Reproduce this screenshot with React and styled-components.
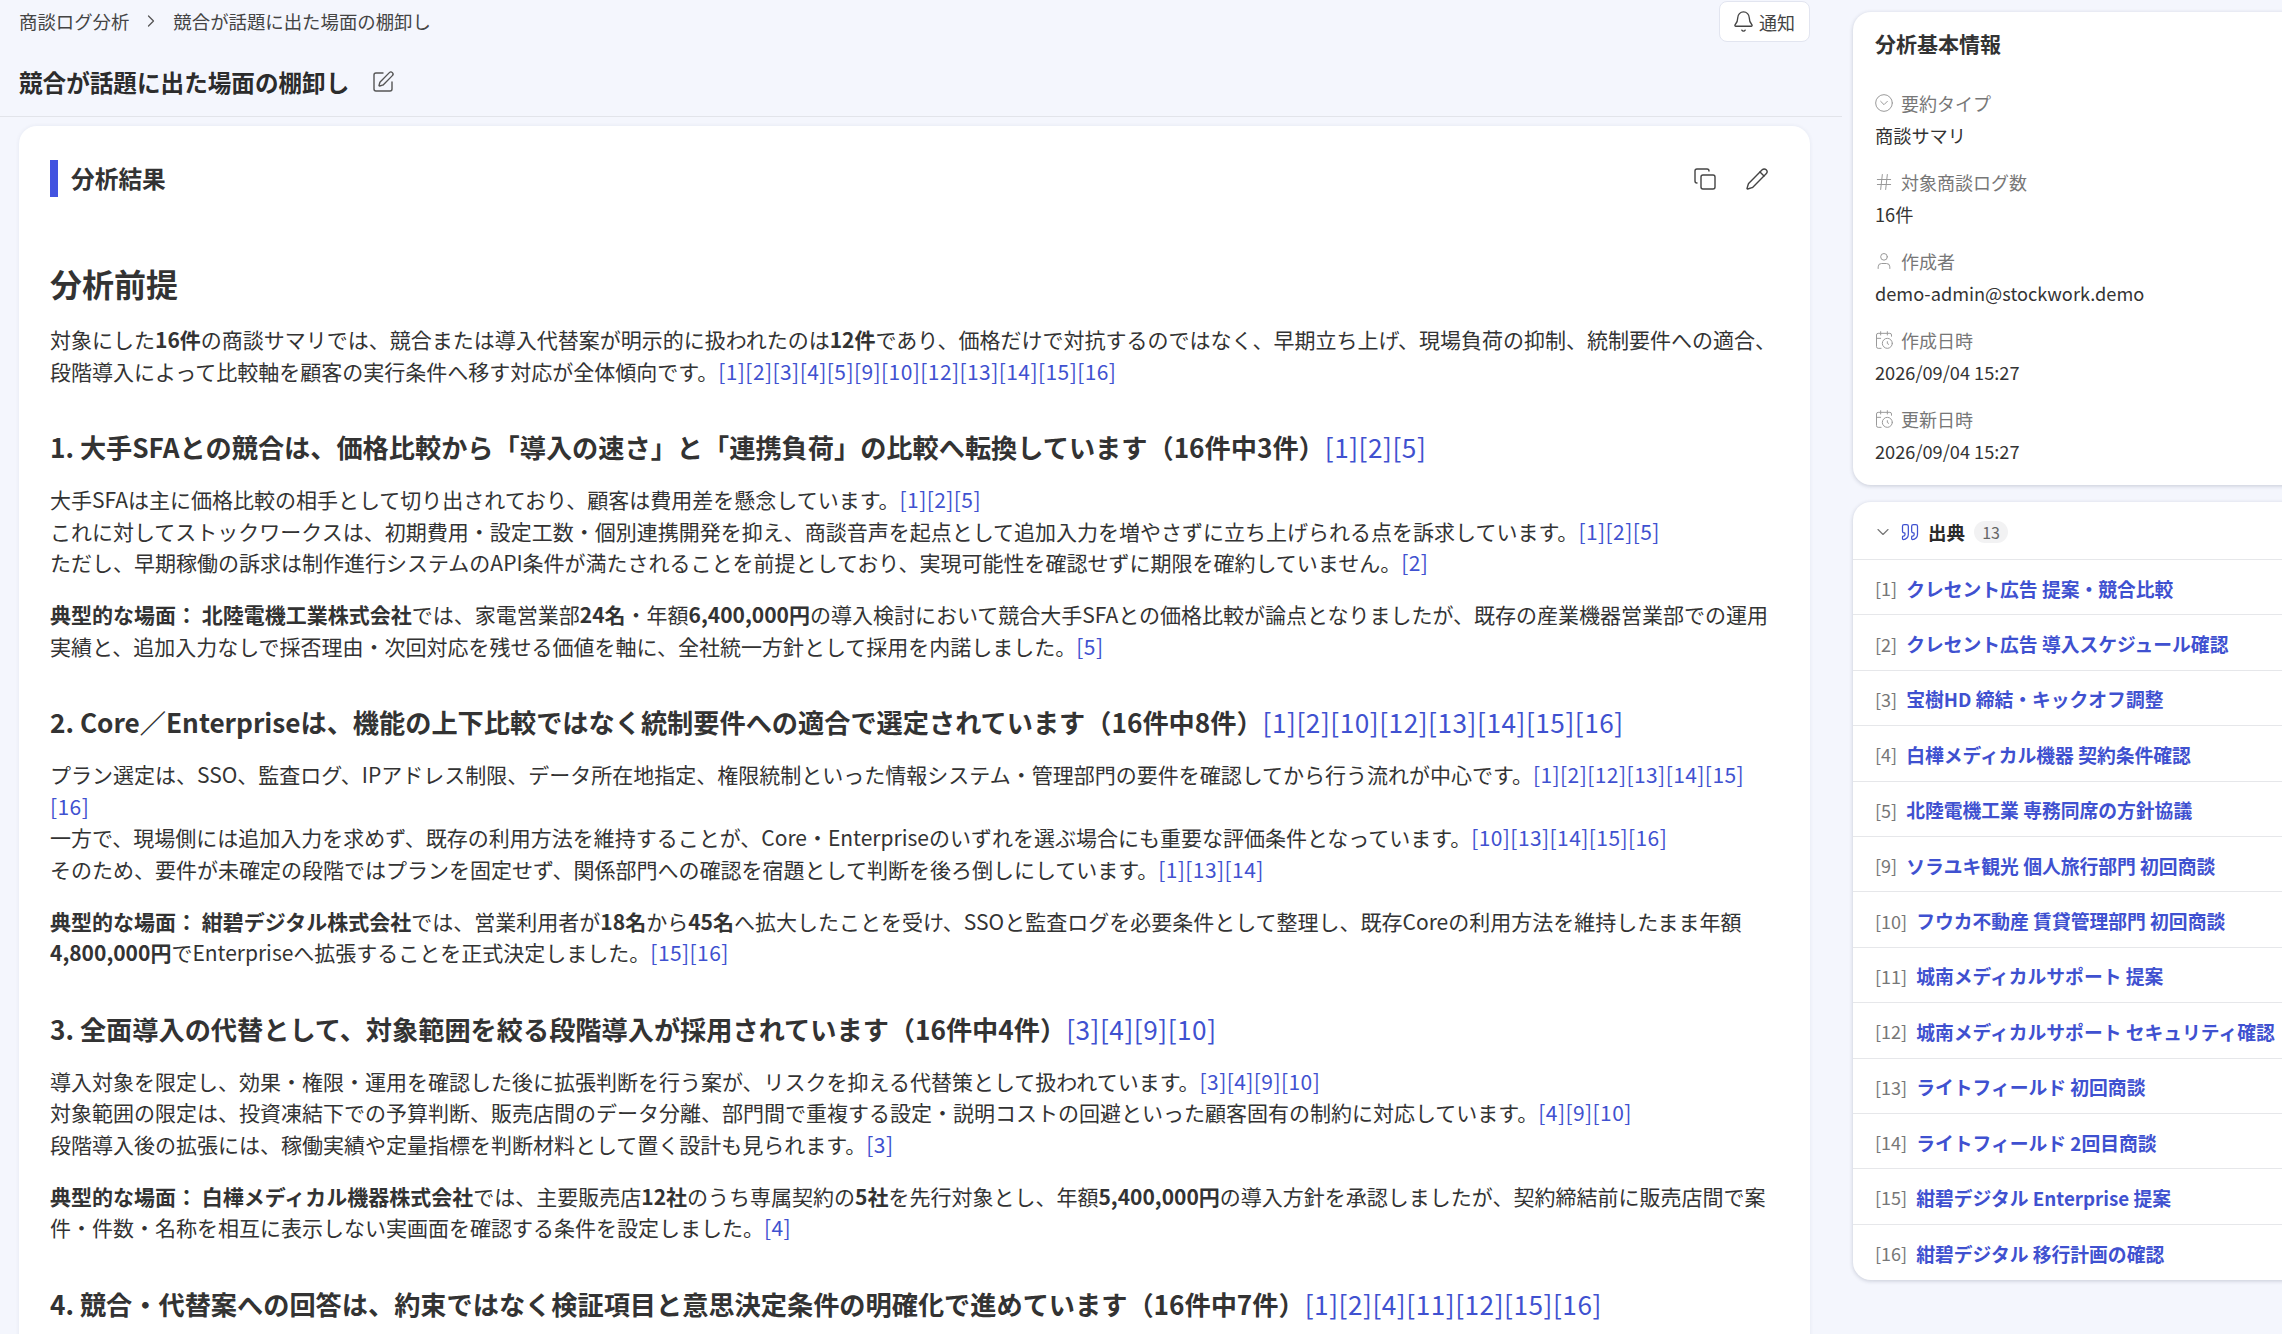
import React from "react";
import styled, { createGlobalStyle } from "styled-components";
import {
  Bell,
  CalendarClock,
  ChevronDown,
  ChevronRight,
  CircleChevronDown,
  Copy,
  Hash,
  Pencil,
  Quote,
  SquarePen,
  User,
} from "lucide-react";

const GlobalStyle = createGlobalStyle`
  html, body {
    margin: 0;
    height: 100%;
    overflow: hidden;
    background: #f4f6fd;
  }
  body {
    font-family: "Noto Sans CJK JP", "Noto Sans", sans-serif;
    color: #333;
  }
`;

const Page = styled.div`
  display: flex;
  height: 1334px;
  overflow: hidden;
`;

const Main = styled.main`
  width: 1842px;
  flex-shrink: 0;
`;

const Header = styled.header`
  height: 115px;
  border-bottom: 1px solid #e2e4ea;
  padding: 1px 32px 0 19px;
`;

const TopRow = styled.div`
  display: flex;
  align-items: center;
  justify-content: space-between;
  height: 41px;
`;

const Crumbs = styled.nav`
  display: flex;
  align-items: center;
  padding-bottom: 2px;
  font-size: 18.4px;
  color: #444;
`;

const CrumbSep = styled.span`
  display: flex;
  margin: 0 12px;
  color: #555;
`;

const NotifyButton = styled.button`
  display: flex;
  align-items: center;
  gap: 4px;
  width: 91px;
  height: 41px;
  padding: 0 0 0 12px;
  background: #fff;
  border: 1px solid #e2e5f0;
  border-radius: 8px;
  font: inherit;
  font-size: 18px;
  color: #444;
`;

const TitleRow = styled.div`
  display: flex;
  align-items: center;
  gap: 22px;
  height: 40px;
  margin-top: 20px;
`;

const Title = styled.h1`
  margin: 0;
  font-size: 23.6px;
  font-weight: 700;
  color: #2c2c2c;
`;

const Content = styled.div`
  padding: 9px 32px 0 19px;
`;

const ResultCard = styled.section`
  background: #fff;
  border-radius: 18px;
  padding: 34px 31px 40px;
  box-shadow: 0 0 4px rgba(30, 40, 90, 0.07);
`;

const ResultHead = styled.div`
  display: flex;
  align-items: center;
  justify-content: space-between;
  height: 37px;
`;

const ResultTitle = styled.h2`
  margin: 0;
  padding-left: 13px;
  border-left: 8px solid #4353e0;
  font-size: 23.7px;
  font-weight: 600;
  line-height: 37px;
  color: #333;
`;

const ToolIcons = styled.div`
  display: flex;
  gap: 28px;
  padding-right: 10px;
  color: #444;
`;

const Lead = styled.h2`
  margin: 62px 0 0;
  font-size: 32px;
  font-weight: 600;
  line-height: 48px;
  color: #333;
`;

const Section = styled.h3`
  margin: 40px 0 0;
  font-size: 26.2px;
  font-weight: 600;
  line-height: 40px;
  color: #333;
`;

const Para = styled.p`
  margin: ${(p) => p.$gap || 20.5}px 0 0;
  font-size: 21px;
  line-height: 31.5px;
  color: #333;
  strong {
    font-weight: 700;
  }
`;

const Ref = styled.span`
  display: inline-block;
  color: #3f51d0;
  font-weight: 400;
  letter-spacing: 0.02em;
`;

const Side = styled.aside`
  width: 429px;
  flex-shrink: 0;
  margin-left: 11px;
  padding-top: 12px;
`;

const SideCard = styled.section`
  background: #fff;
  border-radius: 18px 0 0 18px;
  width: 460px;
  box-shadow: 0 1px 4px rgba(20, 30, 60, 0.2);
`;

const InfoCard = styled(SideCard)`
  height: 473px;
  padding: 14px 22px;
  box-sizing: border-box;
`;

const InfoTitle = styled.h3`
  margin: 0 0 27px;
  font-size: 21px;
  font-weight: 600;
  line-height: 34px;
  color: #333;
`;

const InfoItem = styled.div`
  height: 79px;
  display: flex;
  flex-direction: column;
`;

const InfoLabel = styled.div`
  display: flex;
  align-items: center;
  gap: 7px;
  height: 31px;
  margin-left: -1px;
  font-size: 18px;
  color: #777;
  svg {
    color: #9a9a9a;
  }
`;

const InfoValue = styled.div`
  margin-top: 2px;
  font-size: 18.2px;
  line-height: 31px;
  color: #333;
`;

const SourceCard = styled(SideCard)`
  margin-top: 17px;
`;

const SourceHead = styled.div`
  display: flex;
  align-items: center;
  height: 58px;
  padding: 2px 0 0 20px;
  box-sizing: border-box;
  border-bottom: 1px solid #e6e7ea;
`;

const HeadChevron = styled.span`
  display: flex;
  width: 27px;
  color: #777;
`;

const HeadQuote = styled.span`
  display: flex;
  width: 28px;
  color: #3f51d0;
`;

const SourceTitle = styled.span`
  font-size: 18.5px;
  font-weight: 700;
  color: #2b2b2b;
`;

const CountBadge = styled.span`
  margin-left: 9px;
  width: 34px;
  height: 22px;
  line-height: 22px;
  text-align: center;
  border-radius: 11px;
  background: #f2f2f3;
  font-size: 16px;
  color: #666;
`;

const SourceRow = styled.a`
  display: flex;
  align-items: center;
  height: 55.4px;
  box-sizing: border-box;
  padding: 2px 0 0 22px;
  border-bottom: 1px solid #e6e7ea;
  white-space: nowrap;
  &:last-child {
    border-bottom: none;
  }
`;

const SourceNo = styled.span`
  font-size: 18px;
  color: #777;
  margin-right: 9px;
`;

const SourceName = styled.span`
  font-size: 18.8px;
  font-weight: 700;
  color: #3f51d0;
`;

const R = ({ n }) => n.map((x) => <Ref key={x}>[{x}]</Ref>);

const infoItems = [
  { icon: CircleChevronDown, label: "要約タイプ", value: "商談サマリ" },
  { icon: Hash, label: "対象商談ログ数", value: "16件" },
  { icon: User, label: "作成者", value: "demo-admin@stockwork.demo" },
  { icon: CalendarClock, label: "作成日時", value: "2026/09/04 15:27" },
  { icon: CalendarClock, label: "更新日時", value: "2026/09/04 15:27" },
];

const sources = [
  [1, "クレセント広告 提案・競合比較"],
  [2, "クレセント広告 導入スケジュール確認"],
  [3, "宝樹HD 締結・キックオフ調整"],
  [4, "白樺メディカル機器 契約条件確認"],
  [5, "北陸電機工業 専務同席の方針協議"],
  [9, "ソラユキ観光 個人旅行部門 初回商談"],
  [10, "フウカ不動産 賃貸管理部門 初回商談"],
  [11, "城南メディカルサポート 提案"],
  [12, "城南メディカルサポート セキュリティ確認"],
  [13, "ライトフィールド 初回商談"],
  [14, "ライトフィールド 2回目商談"],
  [15, "紺碧デジタル Enterprise 提案"],
  [16, "紺碧デジタル 移行計画の確認"],
];

export default function App() {
  return (
    <Page>
      <GlobalStyle />
      <Main>
        <Header>
          <TopRow>
            <Crumbs>
              商談ログ分析
              <CrumbSep>
                <ChevronRight size={20} strokeWidth={1.5} />
              </CrumbSep>
              競合が話題に出た場面の棚卸し
            </Crumbs>
            <NotifyButton>
              <Bell size={23} strokeWidth={1.4} />
              通知
            </NotifyButton>
          </TopRow>
          <TitleRow>
            <Title>競合が話題に出た場面の棚卸し</Title>
            <SquarePen size={24} strokeWidth={1.4} color="#555" />
          </TitleRow>
        </Header>
        <Content>
          <ResultCard>
            <ResultHead>
              <ResultTitle>分析結果</ResultTitle>
              <ToolIcons>
                <Copy size={24} strokeWidth={1.4} />
                <Pencil size={24} strokeWidth={1.4} />
              </ToolIcons>
            </ResultHead>

            <Lead>分析前提</Lead>
            <Para $gap={17}>
              対象にした<strong>16件</strong>の商談サマリでは、競合または導入代替案が明示的に扱われたのは<strong>12件</strong>であり、価格だけで対抗するのではなく、早期立ち上げ、現場負荷の抑制、統制要件への適合、段階導入によって比較軸を顧客の実行条件へ移す対応が全体傾向です。
              <R n={[1, 2, 3, 4, 5, 9, 10, 12, 13, 14, 15, 16]} />
            </Para>

            <Section>
              1. 大手SFAとの競合は、価格比較から「導入の速さ」と「連携負荷」の比較へ転換しています（16件中3件）
              <R n={[1, 2, 5]} />
            </Section>
            <Para $gap={17}>
              大手SFAは主に価格比較の相手として切り出されており、顧客は費用差を懸念しています。
              <R n={[1, 2, 5]} />
              <br />
              これに対してストックワークスは、初期費用・設定工数・個別連携開発を抑え、商談音声を起点として追加入力を増やさずに立ち上げられる点を訴求しています。
              <R n={[1, 2, 5]} />
              <br />
              ただし、早期稼働の訴求は制作進行システムのAPI条件が満たされることを前提としており、実現可能性を確認せずに期限を確約していません。
              <R n={[2]} />
            </Para>
            <Para>
              <strong>典型的な場面： 北陸電機工業株式会社</strong>では、家電営業部<strong>24名</strong>・年額<strong>6,400,000円</strong>の導入検討において競合大手SFAとの価格比較が論点となりましたが、既存の産業機器営業部での運用実績と、追加入力なしで採否理由・次回対応を残せる価値を軸に、全社統一方針として採用を内諾しました。
              <R n={[5]} />
            </Para>

            <Section>
              2. Core／Enterpriseは、機能の上下比較ではなく統制要件への適合で選定されています（16件中8件）
              <R n={[1, 2, 10, 12, 13, 14, 15, 16]} />
            </Section>
            <Para $gap={17}>
              プラン選定は、SSO、監査ログ、IPアドレス制限、データ所在地指定、権限統制といった情報システム・管理部門の要件を確認してから行う流れが中心です。
              <R n={[1, 2, 12, 13, 14, 15, 16]} />
              <br />
              一方で、現場側には追加入力を求めず、既存の利用方法を維持することが、Core・Enterpriseのいずれを選ぶ場合にも重要な評価条件となっています。
              <R n={[10, 13, 14, 15, 16]} />
              <br />
              そのため、要件が未確定の段階ではプランを固定せず、関係部門への確認を宿題として判断を後ろ倒しにしています。
              <R n={[1, 13, 14]} />
            </Para>
            <Para>
              <strong>典型的な場面： 紺碧デジタル株式会社</strong>では、営業利用者が<strong>18名</strong>から<strong>45名</strong>へ拡大したことを受け、SSOと監査ログを必要条件として整理し、既存Coreの利用方法を維持したまま年額<strong>4,800,000円</strong>でEnterpriseへ拡張することを正式決定しました。
              <R n={[15, 16]} />
            </Para>

            <Section>
              3. 全面導入の代替として、対象範囲を絞る段階導入が採用されています（16件中4件）
              <R n={[3, 4, 9, 10]} />
            </Section>
            <Para $gap={17}>
              導入対象を限定し、効果・権限・運用を確認した後に拡張判断を行う案が、リスクを抑える代替策として扱われています。
              <R n={[3, 4, 9, 10]} />
              <br />
              対象範囲の限定は、投資凍結下での予算判断、販売店間のデータ分離、部門間で重複する設定・説明コストの回避といった顧客固有の制約に対応しています。
              <R n={[4, 9, 10]} />
              <br />
              段階導入後の拡張には、稼働実績や定量指標を判断材料として置く設計も見られます。
              <R n={[3]} />
            </Para>
            <Para>
              <strong>典型的な場面： 白樺メディカル機器株式会社</strong>では、主要販売店<strong>12社</strong>のうち専属契約の<strong>5社</strong>を先行対象とし、年額<strong>5,400,000円</strong>の導入方針を承認しましたが、契約締結前に販売店間で案件・件数・名称を相互に表示しない実画面を確認する条件を設定しました。
              <R n={[4]} />
            </Para>

            <Section>
              4. 競合・代替案への回答は、約束ではなく検証項目と意思決定条件の明確化で進めています（16件中7件）
              <R n={[1, 2, 4, 11, 12, 15, 16]} />
            </Section>
          </ResultCard>
        </Content>
      </Main>

      <Side>
        <InfoCard>
          <InfoTitle>分析基本情報</InfoTitle>
          {infoItems.map(({ icon: Icon, label, value }) => (
            <InfoItem key={label}>
              <InfoLabel>
                <Icon size={20} strokeWidth={1.2} />
                {label}
              </InfoLabel>
              <InfoValue>{value}</InfoValue>
            </InfoItem>
          ))}
        </InfoCard>
        <SourceCard>
          <SourceHead>
            <HeadChevron>
              <ChevronDown size={20} strokeWidth={1.4} />
            </HeadChevron>
            <HeadQuote>
              <Quote size={20} strokeWidth={1.5} />
            </HeadQuote>
            <SourceTitle>出典</SourceTitle>
            <CountBadge>13</CountBadge>
          </SourceHead>
          {sources.map(([no, name]) => (
            <SourceRow key={no}>
              <SourceNo>[{no}]</SourceNo>
              <SourceName>{name}</SourceName>
            </SourceRow>
          ))}
        </SourceCard>
      </Side>
    </Page>
  );
}
